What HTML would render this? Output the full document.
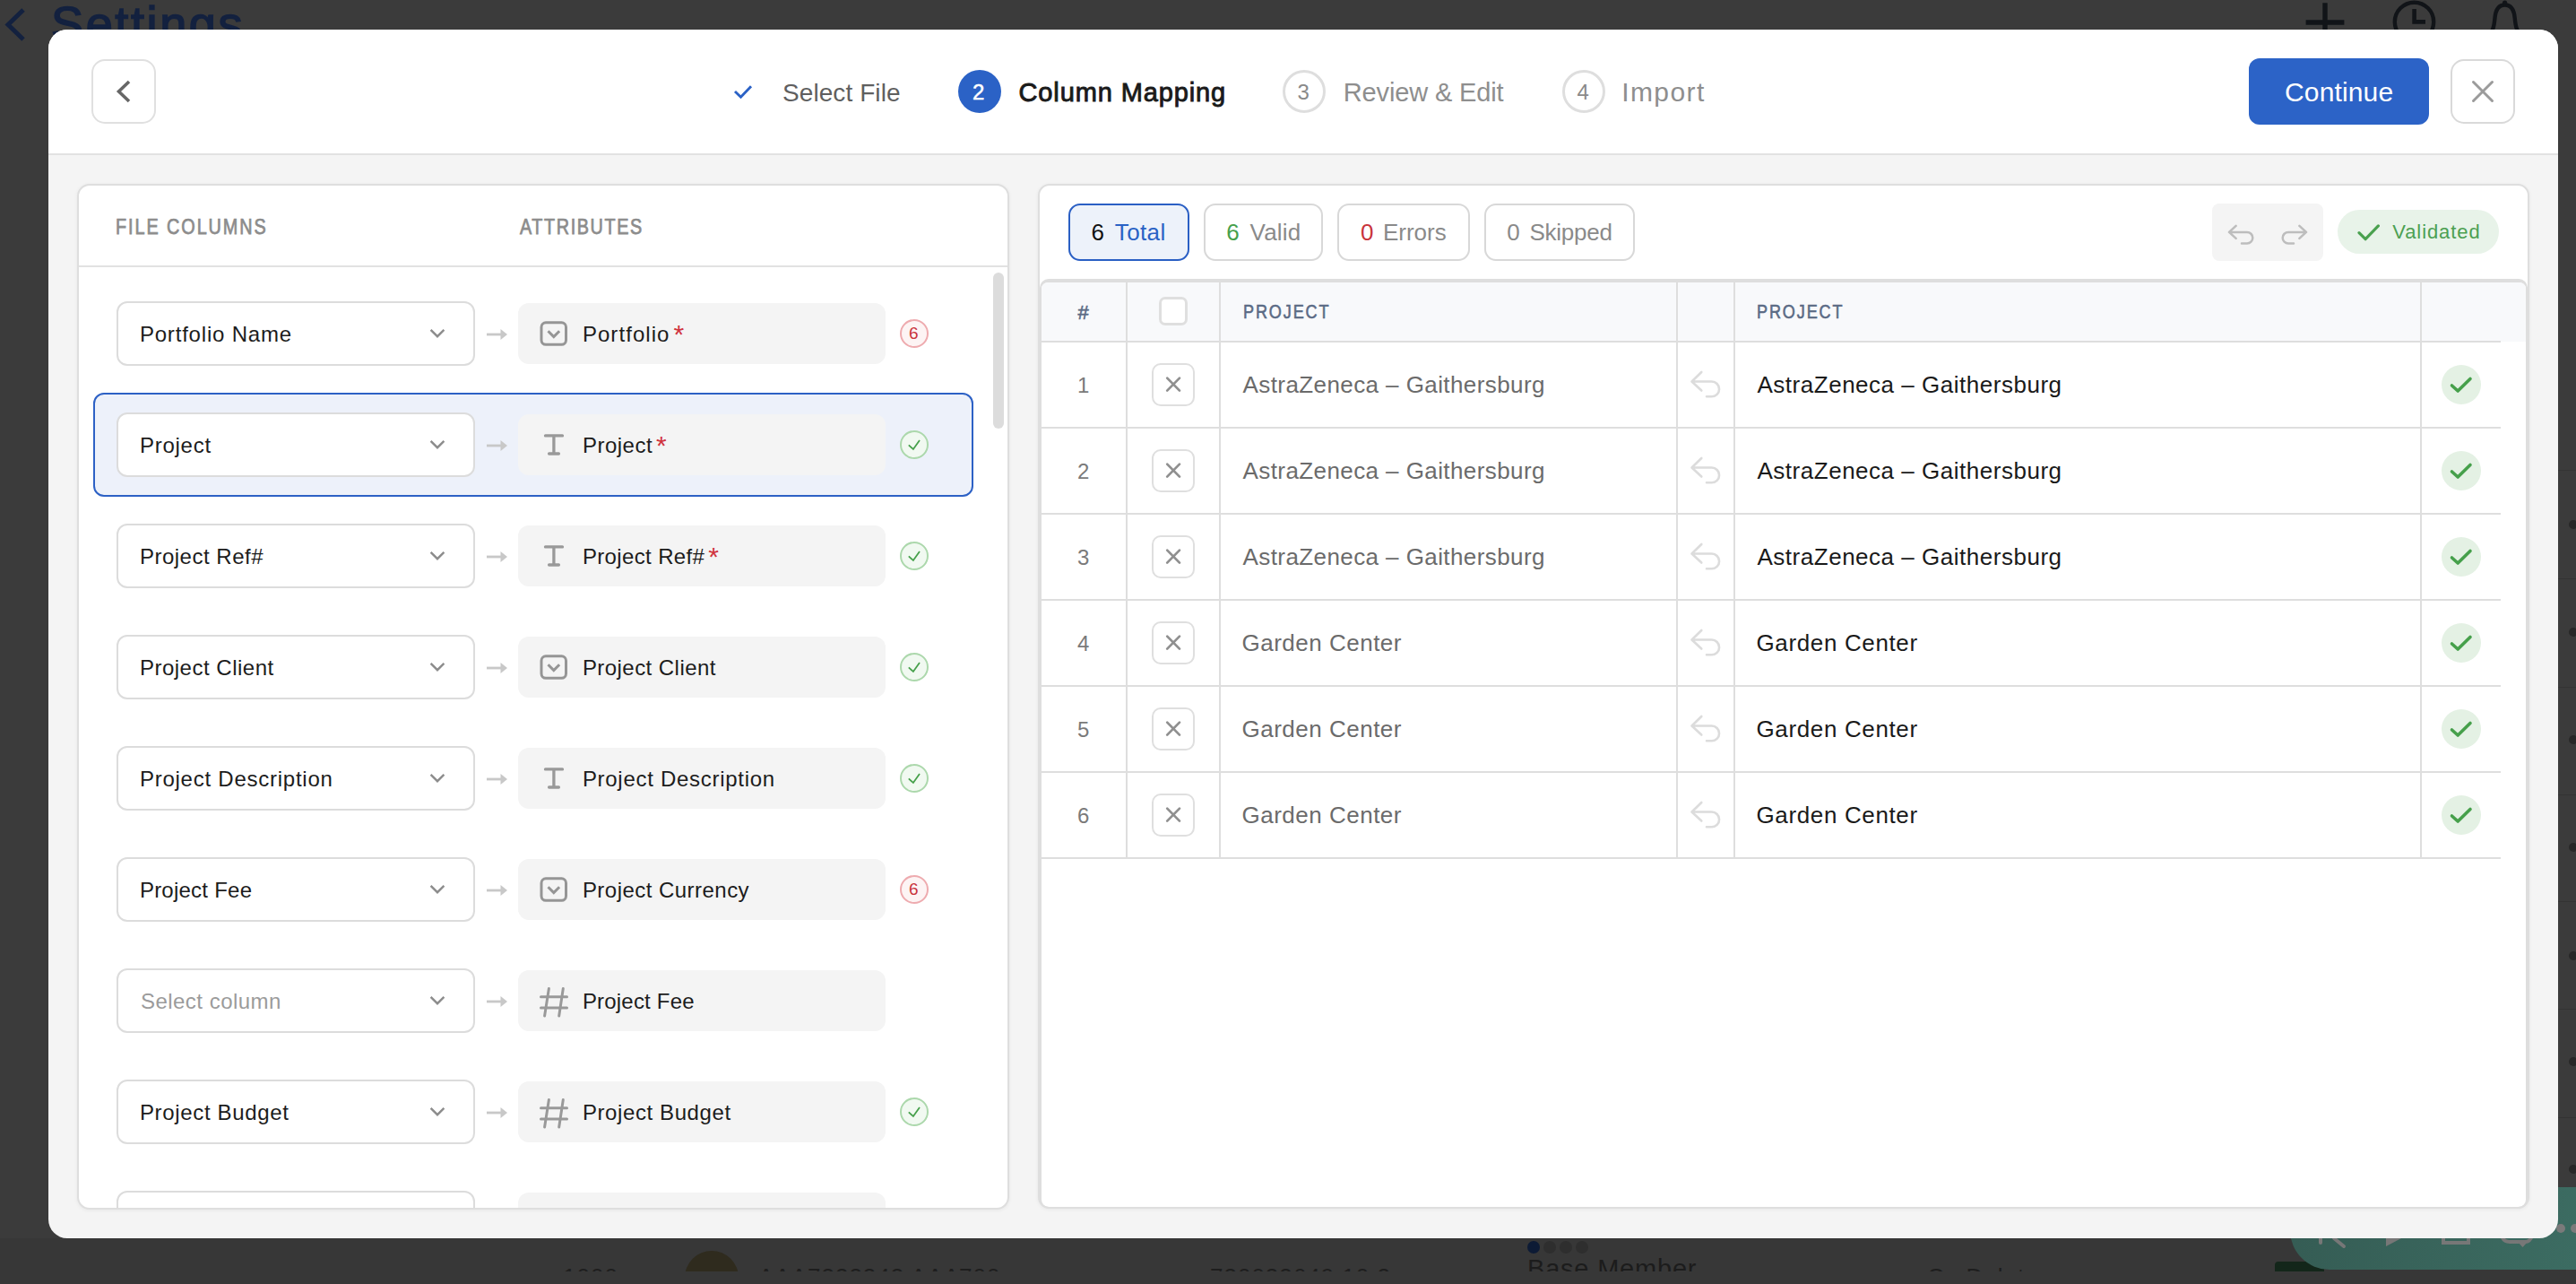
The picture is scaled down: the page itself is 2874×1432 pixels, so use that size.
<!DOCTYPE html>
<html><head><meta charset="utf-8"><style>
html,body{margin:0;padding:0;}
body{width:2874px;height:1432px;overflow:hidden;position:relative;background:#3b3b3b;font-family:"Liberation Sans", sans-serif;}
.a{position:absolute;}
.t{position:absolute;white-space:nowrap;line-height:1;}
svg.a{overflow:visible;}
</style></head><body>
<svg class="a" style="left:0px;top:0px;" width="40" height="60" viewBox="0 0 40 60"><polyline points="26,11 9,27.5 26,44" fill="none" stroke="#13213f" stroke-width="5"/></svg><div class="t" style="left:57.0px;top:-1.2px;font-size:54px;color:#13213f;font-weight:400;letter-spacing:2.629px;-webkit-text-stroke:1.6px #13213f;">Settings</div><svg class="a" style="left:2560px;top:0px;" width="280" height="34" viewBox="2560 0 280 34"><path d="M2594,3.3 V40 M2572.6,25 H2615.4" stroke="#111418" stroke-width="5.4" fill="none"/><circle cx="2693.5" cy="24.4" r="21.7" stroke="#111418" stroke-width="4.4" fill="none"/><path d="M2693.6,10 V24.4 H2706" stroke="#111418" stroke-width="4.6" fill="none"/><path d="M2776,40 C2781,35 2782.5,31 2783.5,20 C2784.5,9 2789,5.5 2794.6,5.5 C2800.2,5.5 2804.7,9 2805.7,20 C2806.7,31 2808.2,35 2813.2,40" stroke="#111418" stroke-width="4.4" fill="none"/><circle cx="2794.6" cy="3.2" r="2.6" fill="#111418"/></svg><div class="a" style="left:2854px;top:524px;width:20px;height:1px;background:#333;"></div><div class="a" style="left:2854px;top:645px;width:20px;height:1px;background:#333;"></div><div class="a" style="left:2854px;top:766px;width:20px;height:1px;background:#333;"></div><div class="a" style="left:2854px;top:886px;width:20px;height:1px;background:#333;"></div><div class="a" style="left:2854px;top:1005px;width:20px;height:1px;background:#333;"></div><div class="a" style="left:2854px;top:1125px;width:20px;height:1px;background:#333;"></div><div class="a" style="left:2854px;top:1246px;width:20px;height:1px;background:#333;"></div><div class="a" style="left:2866px;top:580px;width:10px;height:10px;border-radius:50%;background:#282828;"></div><div class="a" style="left:2866px;top:700px;width:10px;height:10px;border-radius:50%;background:#282828;"></div><div class="a" style="left:2866px;top:820px;width:10px;height:10px;border-radius:50%;background:#282828;"></div><div class="a" style="left:2866px;top:940px;width:10px;height:10px;border-radius:50%;background:#282828;"></div><div class="a" style="left:2866px;top:1061px;width:10px;height:10px;border-radius:50%;background:#282828;"></div><div class="a" style="left:2866px;top:1179px;width:10px;height:10px;border-radius:50%;background:#282828;"></div><div class="a" style="left:2866px;top:1299px;width:10px;height:10px;border-radius:50%;background:#282828;"></div><div class="a" style="left:0;top:1381px;width:2874px;height:51px;background:#373737;"></div><div class="a" style="left:0;top:1380px;width:2874px;height:51px;overflow:hidden;height:38px;"><div class="a" style="left:0;top:-1380px;width:2874px;height:1432px;"><div class="a" style="left:764px;top:1395px;width:60px;height:60px;border-radius:50%;background:#2f2b1e;"></div><div class="a" style="left:1704px;top:1384px;width:14px;height:14px;border-radius:50%;background:#0d1b35;"></div><div class="a" style="left:1722px;top:1384px;width:14px;height:14px;border-radius:50%;background:#2e2e2e;"></div><div class="a" style="left:1740px;top:1384px;width:14px;height:14px;border-radius:50%;background:#2e2e2e;"></div><div class="a" style="left:1758px;top:1384px;width:14px;height:14px;border-radius:50%;background:#2e2e2e;"></div><div class="t" style="left:1704.0px;top:1401.4px;font-size:29px;color:#1c1c1c;font-weight:400;letter-spacing:0.8px;">Base Member</div><div class="t" style="left:628.0px;top:1411.0px;font-size:26px;color:#1e1e1e;font-weight:400;letter-spacing:1px;">1000</div><div class="t" style="left:846.0px;top:1411.0px;font-size:26px;color:#1e1e1e;font-weight:400;letter-spacing:1px;">AAA7333343 AAA</div><div class="t" style="left:1070.0px;top:1411.0px;font-size:26px;color:#1e1e1e;font-weight:400;letter-spacing:1px;">700</div><div class="t" style="left:1350.0px;top:1411.0px;font-size:26px;color:#1e1e1e;font-weight:400;letter-spacing:1px;">730033649 10 2</div><div class="t" style="left:2150.0px;top:1411.0px;font-size:26px;color:#1e1e1e;font-weight:400;letter-spacing:1px;">Co Delete</div></div></div><div class="a" style="left:2538px;top:1407px;width:55px;height:11px;background:#13261a;border-radius:4px 4px 0 0;"></div><div class="a" style="left:2555px;top:1324px;width:319px;height:92px;background:linear-gradient(100deg,#355c54,#3c6c62);border-bottom-left-radius:44px;"></div><div class="a" style="left:2852px;top:1365px;width:10px;height:10px;border-radius:50%;background:#7a7a7a;"></div><div class="a" style="left:2868px;top:1365px;width:10px;height:10px;border-radius:50%;background:#7a7a7a;"></div><svg class="a" style="left:2580px;top:1381px;" width="260" height="12" viewBox="2580 1381 260 12"><path d="M2589,1379 V1386" stroke="#777" stroke-width="4" stroke-linecap="round"/><path d="M2604,1381 L2615,1390" stroke="#777" stroke-width="4" stroke-linecap="round"/><path d="M2662,1390 L2681,1380 H2662 Z" fill="#777"/><path d="M2726,1379 V1386 H2754 V1379" stroke="#777" stroke-width="4" fill="none"/><path d="M2791,1378 Q2793,1385 2800,1385 H2817 Q2823,1385 2825,1378" stroke="#777" stroke-width="4" fill="none"/><path d="M2809,1385 L2814.5,1391 L2820,1385 Z" fill="#777"/></svg><div class="a" id="modal" style="left:54px;top:33px;width:2800px;height:1348px;border-radius:21px;background:#f4f4f4;overflow:hidden;"><div class="a" style="left:-54px;top:-33px;width:2874px;height:1432px;"><div class="a" style="left:54px;top:33px;width:2800px;height:138px;background:#fff;"></div><div class="a" style="left:54px;top:171px;width:2800px;height:2px;background:#e2e2e2;"></div><div class="a" style="left:102px;top:66px;width:72px;height:72px;border:2px solid #e0e0e0;border-radius:15px;box-sizing:border-box;background:#fff;"></div><svg class="a" style="left:120px;top:80px;" width="40" height="40" viewBox="120 80 40 40"><polyline points="144,91 132.5,102 144,113" fill="none" stroke="#666" stroke-width="3.6"/></svg><svg class="a" style="left:810px;top:85px;" width="40" height="35" viewBox="810 85 40 35"><polyline points="820,102 826.5,108.2 838,96.2" fill="none" stroke="#2b62c6" stroke-width="2.9"/></svg><div class="t" style="left:873.0px;top:89.5px;font-size:28px;color:#5f5f5f;font-weight:400;letter-spacing:0.08px;">Select File</div><div class="a" style="left:1069px;top:78px;width:48px;height:48px;border-radius:50%;background:#2b62c6;"></div><div class="t" style="left:1085.0px;top:90.7px;font-size:24px;color:#fff;font-weight:400;letter-spacing:0px;-webkit-text-stroke:0.5px #fff;">2</div><div class="t" style="left:1136.5px;top:88.6px;font-size:29px;color:#1a1a1a;font-weight:400;letter-spacing:0.885px;-webkit-text-stroke:0.9px #1a1a1a;">Column Mapping</div><div class="a" style="left:1431px;top:78px;width:48px;height:48px;border-radius:50%;border:3px solid #dedede;box-sizing:border-box;"></div><div class="t" style="left:1447.5px;top:90.7px;font-size:24px;color:#8a8a8a;font-weight:400;letter-spacing:0px;">3</div><div class="t" style="left:1498.8px;top:88.6px;font-size:29px;color:#8e8e8e;font-weight:400;letter-spacing:-0.142px;">Review &amp; Edit</div><div class="a" style="left:1743px;top:78px;width:48px;height:48px;border-radius:50%;border:3px solid #dedede;box-sizing:border-box;"></div><div class="t" style="left:1759.5px;top:90.7px;font-size:24px;color:#8a8a8a;font-weight:400;letter-spacing:0px;">4</div><div class="t" style="left:1809.2px;top:87.8px;font-size:30px;color:#8e8e8e;font-weight:400;letter-spacing:1.42px;">Import</div><div class="a" style="left:2509px;top:65px;width:201px;height:74px;background:#2c63c7;border-radius:12px;"></div><div class="t" style="left:2549.0px;top:88.1px;font-size:30px;color:#fff;font-weight:400;letter-spacing:0.143px;">Continue</div><div class="a" style="left:2734px;top:66px;width:72px;height:72px;border:2px solid #d9d9d9;border-radius:15px;box-sizing:border-box;background:#fff;"></div><svg class="a" style="left:2750px;top:82px;" width="40" height="40" viewBox="2750 82 40 40"><path d="M2759.5,91.5 L2780.5,112.5 M2780.5,91.5 L2759.5,112.5" stroke="#9b9b9b" stroke-width="3" stroke-linecap="round"/></svg><div class="a" style="left:86px;top:205px;width:1040px;height:1144px;background:#fff;border:2px solid #dedede;border-radius:14px;box-sizing:border-box;box-shadow:0 1px 4px rgba(0,0,0,0.06);"></div><div class="a" style="left:88px;top:207px;width:1036px;height:1140px;overflow:hidden;border-radius:12px;"><div class="a" style="left:-88px;top:-207px;width:2874px;height:1432px;"><div class="t" style="left:128.5px;top:241.5px;font-size:23px;color:#8c8c8c;font-weight:400;letter-spacing:2.279px;-webkit-text-stroke:0.75px #8c8c8c;transform:scaleX(0.86);transform-origin:0 0;">FILE COLUMNS</div><div class="t" style="left:580.3px;top:241.5px;font-size:23px;color:#8c8c8c;font-weight:400;letter-spacing:1.891px;-webkit-text-stroke:0.75px #8c8c8c;transform:scaleX(0.86);transform-origin:0 0;">ATTRIBUTES</div><div class="a" style="left:88px;top:296px;width:1038px;height:2px;background:#e2e2e2;"></div><div class="a" style="left:1108px;top:304px;width:12px;height:174px;background:#dcdcdc;border-radius:6px;"></div><div class="a" style="left:130px;top:336px;width:400px;height:72px;background:#fff;border:2px solid #dcdcdc;border-radius:12px;box-sizing:border-box;"></div><div class="t" style="left:155.9px;top:360.7px;font-size:24px;color:#1c1c1c;font-weight:400;letter-spacing:0.808px;">Portfolio Name</div><svg class="a" style="left:470px;top:355px;" width="40" height="35" viewBox="470 355 40 35"><polyline points="480.6,367.8 488,375.2 495.4,367.8" fill="none" stroke="#8c8c8c" stroke-width="2.4"/></svg><svg class="a" style="left:540px;top:360px;" width="30" height="25" viewBox="540 360 30 25"><path d="M543,373 H561" stroke="#c8c8c8" stroke-width="2.8"/><path d="M558.5,367 L566,373 L558.5,379 Z" fill="#c8c8c8"/></svg><div class="a" style="left:578px;top:338px;width:410px;height:68px;background:#f4f4f4;border-radius:12px;"></div><svg class="a" style="left:595px;top:350px;" width="45" height="45" viewBox="595 350 45 45"><rect x="604" y="359.8" width="27.5" height="24.5" rx="5" fill="none" stroke="#959595" stroke-width="3"/><polyline points="611.5,369.2 617.8,375.6 624.1,369.2" fill="none" stroke="#959595" stroke-width="3"/></svg><div class="t" style="left:649.9px;top:360.7px;font-size:24px;color:#1c1c1c;font-weight:400;letter-spacing:1.062px;">Portfolio<span style="color:#d0343f;margin-left:4px;font-size:30px;line-height:0;letter-spacing:0;position:relative;top:2px;">*</span></div><div class="a" style="left:1004px;top:356px;width:32px;height:32px;border-radius:50%;border:2px solid #eeabaf;background:#fdf4f4;box-sizing:border-box;"></div><div class="t" style="left:1014.0px;top:362.4px;font-size:19px;color:#c9343c;font-weight:400;letter-spacing:0px;">6</div><div class="a" style="left:104px;top:438px;width:982px;height:116px;background:#edf1fa;border:2.5px solid #2d61c5;border-radius:12px;box-sizing:border-box;"></div><div class="a" style="left:130px;top:460px;width:400px;height:72px;background:#fff;border:2px solid #dcdcdc;border-radius:12px;box-sizing:border-box;"></div><div class="t" style="left:155.9px;top:484.7px;font-size:24px;color:#1c1c1c;font-weight:400;letter-spacing:0.75px;">Project</div><svg class="a" style="left:470px;top:479px;" width="40" height="35" viewBox="470 479 40 35"><polyline points="480.6,491.8 488,499.2 495.4,491.8" fill="none" stroke="#8c8c8c" stroke-width="2.4"/></svg><svg class="a" style="left:540px;top:484px;" width="30" height="25" viewBox="540 484 30 25"><path d="M543,497 H561" stroke="#c8c8c8" stroke-width="2.8"/><path d="M558.5,491 L566,497 L558.5,503 Z" fill="#c8c8c8"/></svg><div class="a" style="left:578px;top:462px;width:410px;height:68px;background:#f4f4f4;border-radius:12px;"></div><svg class="a" style="left:595px;top:475px;" width="45" height="45" viewBox="595 475 45 45"><path d="M608.5,485.9 H627.5 M617.9,485.9 V506 M612.6,506 H623.4" stroke="#999" stroke-width="3.3" stroke-linecap="round" fill="none"/></svg><div class="t" style="left:649.9px;top:484.7px;font-size:24px;color:#1c1c1c;font-weight:400;letter-spacing:0.5px;">Project<span style="color:#d0343f;margin-left:4px;font-size:30px;line-height:0;letter-spacing:0;position:relative;top:2px;">*</span></div><div class="a" style="left:1004px;top:480px;width:32px;height:32px;border-radius:50%;border:2px solid #acd8ac;background:#f1f9f1;box-sizing:border-box;"></div><svg class="a" style="left:1004px;top:480px;" width="32" height="32" viewBox="1004 480 32 32"><polyline points="1013.8,496.4 1018.9,501 1026,491" fill="none" stroke="#46a04b" stroke-width="1.8"/></svg><div class="a" style="left:130px;top:584px;width:400px;height:72px;background:#fff;border:2px solid #dcdcdc;border-radius:12px;box-sizing:border-box;"></div><div class="t" style="left:155.9px;top:608.7px;font-size:24px;color:#1c1c1c;font-weight:400;letter-spacing:0.509px;">Project Ref#</div><svg class="a" style="left:470px;top:603px;" width="40" height="35" viewBox="470 603 40 35"><polyline points="480.6,615.8 488,623.2 495.4,615.8" fill="none" stroke="#8c8c8c" stroke-width="2.4"/></svg><svg class="a" style="left:540px;top:608px;" width="30" height="25" viewBox="540 608 30 25"><path d="M543,621 H561" stroke="#c8c8c8" stroke-width="2.8"/><path d="M558.5,615 L566,621 L558.5,627 Z" fill="#c8c8c8"/></svg><div class="a" style="left:578px;top:586px;width:410px;height:68px;background:#f4f4f4;border-radius:12px;"></div><svg class="a" style="left:595px;top:599px;" width="45" height="45" viewBox="595 599 45 45"><path d="M608.5,609.9 H627.5 M617.9,609.9 V630 M612.6,630 H623.4" stroke="#999" stroke-width="3.3" stroke-linecap="round" fill="none"/></svg><div class="t" style="left:649.9px;top:608.7px;font-size:24px;color:#1c1c1c;font-weight:400;letter-spacing:0.364px;">Project Ref#<span style="color:#d0343f;margin-left:4px;font-size:30px;line-height:0;letter-spacing:0;position:relative;top:2px;">*</span></div><div class="a" style="left:1004px;top:604px;width:32px;height:32px;border-radius:50%;border:2px solid #acd8ac;background:#f1f9f1;box-sizing:border-box;"></div><svg class="a" style="left:1004px;top:604px;" width="32" height="32" viewBox="1004 604 32 32"><polyline points="1013.8,620.4 1018.9,625 1026,615" fill="none" stroke="#46a04b" stroke-width="1.8"/></svg><div class="a" style="left:130px;top:708px;width:400px;height:72px;background:#fff;border:2px solid #dcdcdc;border-radius:12px;box-sizing:border-box;"></div><div class="t" style="left:155.9px;top:732.7px;font-size:24px;color:#1c1c1c;font-weight:400;letter-spacing:0.508px;">Project Client</div><svg class="a" style="left:470px;top:727px;" width="40" height="35" viewBox="470 727 40 35"><polyline points="480.6,739.8 488,747.2 495.4,739.8" fill="none" stroke="#8c8c8c" stroke-width="2.4"/></svg><svg class="a" style="left:540px;top:732px;" width="30" height="25" viewBox="540 732 30 25"><path d="M543,745 H561" stroke="#c8c8c8" stroke-width="2.8"/><path d="M558.5,739 L566,745 L558.5,751 Z" fill="#c8c8c8"/></svg><div class="a" style="left:578px;top:710px;width:410px;height:68px;background:#f4f4f4;border-radius:12px;"></div><svg class="a" style="left:595px;top:722px;" width="45" height="45" viewBox="595 722 45 45"><rect x="604" y="731.8" width="27.5" height="24.5" rx="5" fill="none" stroke="#959595" stroke-width="3"/><polyline points="611.5,741.2 617.8,747.6 624.1,741.2" fill="none" stroke="#959595" stroke-width="3"/></svg><div class="t" style="left:649.9px;top:732.7px;font-size:24px;color:#1c1c1c;font-weight:400;letter-spacing:0.446px;">Project Client</div><div class="a" style="left:1004px;top:728px;width:32px;height:32px;border-radius:50%;border:2px solid #acd8ac;background:#f1f9f1;box-sizing:border-box;"></div><svg class="a" style="left:1004px;top:728px;" width="32" height="32" viewBox="1004 728 32 32"><polyline points="1013.8,744.4 1018.9,749 1026,739" fill="none" stroke="#46a04b" stroke-width="1.8"/></svg><div class="a" style="left:130px;top:832px;width:400px;height:72px;background:#fff;border:2px solid #dcdcdc;border-radius:12px;box-sizing:border-box;"></div><div class="t" style="left:155.9px;top:856.7px;font-size:24px;color:#1c1c1c;font-weight:400;letter-spacing:0.756px;">Project Description</div><svg class="a" style="left:470px;top:851px;" width="40" height="35" viewBox="470 851 40 35"><polyline points="480.6,863.8 488,871.2 495.4,863.8" fill="none" stroke="#8c8c8c" stroke-width="2.4"/></svg><svg class="a" style="left:540px;top:856px;" width="30" height="25" viewBox="540 856 30 25"><path d="M543,869 H561" stroke="#c8c8c8" stroke-width="2.8"/><path d="M558.5,863 L566,869 L558.5,875 Z" fill="#c8c8c8"/></svg><div class="a" style="left:578px;top:834px;width:410px;height:68px;background:#f4f4f4;border-radius:12px;"></div><svg class="a" style="left:595px;top:847px;" width="45" height="45" viewBox="595 847 45 45"><path d="M608.5,857.9 H627.5 M617.9,857.9 V878 M612.6,878 H623.4" stroke="#999" stroke-width="3.3" stroke-linecap="round" fill="none"/></svg><div class="t" style="left:649.9px;top:856.7px;font-size:24px;color:#1c1c1c;font-weight:400;letter-spacing:0.711px;">Project Description</div><div class="a" style="left:1004px;top:852px;width:32px;height:32px;border-radius:50%;border:2px solid #acd8ac;background:#f1f9f1;box-sizing:border-box;"></div><svg class="a" style="left:1004px;top:852px;" width="32" height="32" viewBox="1004 852 32 32"><polyline points="1013.8,868.4 1018.9,873 1026,863" fill="none" stroke="#46a04b" stroke-width="1.8"/></svg><div class="a" style="left:130px;top:956px;width:400px;height:72px;background:#fff;border:2px solid #dcdcdc;border-radius:12px;box-sizing:border-box;"></div><div class="t" style="left:155.9px;top:980.7px;font-size:24px;color:#1c1c1c;font-weight:400;letter-spacing:0.24px;">Project Fee</div><svg class="a" style="left:470px;top:975px;" width="40" height="35" viewBox="470 975 40 35"><polyline points="480.6,987.8 488,995.2 495.4,987.8" fill="none" stroke="#8c8c8c" stroke-width="2.4"/></svg><svg class="a" style="left:540px;top:980px;" width="30" height="25" viewBox="540 980 30 25"><path d="M543,993 H561" stroke="#c8c8c8" stroke-width="2.8"/><path d="M558.5,987 L566,993 L558.5,999 Z" fill="#c8c8c8"/></svg><div class="a" style="left:578px;top:958px;width:410px;height:68px;background:#f4f4f4;border-radius:12px;"></div><svg class="a" style="left:595px;top:970px;" width="45" height="45" viewBox="595 970 45 45"><rect x="604" y="979.8" width="27.5" height="24.5" rx="5" fill="none" stroke="#959595" stroke-width="3"/><polyline points="611.5,989.2 617.8,995.6 624.1,989.2" fill="none" stroke="#959595" stroke-width="3"/></svg><div class="t" style="left:649.9px;top:980.7px;font-size:24px;color:#1c1c1c;font-weight:400;letter-spacing:0.467px;">Project Currency</div><div class="a" style="left:1004px;top:976px;width:32px;height:32px;border-radius:50%;border:2px solid #eeabaf;background:#fdf4f4;box-sizing:border-box;"></div><div class="t" style="left:1014.0px;top:982.4px;font-size:19px;color:#c9343c;font-weight:400;letter-spacing:0px;">6</div><div class="a" style="left:130px;top:1080px;width:400px;height:72px;background:#fff;border:2px solid #dcdcdc;border-radius:12px;box-sizing:border-box;"></div><div class="t" style="left:156.9px;top:1104.7px;font-size:24px;color:#9b9b9b;font-weight:400;letter-spacing:0.483px;">Select column</div><svg class="a" style="left:470px;top:1099px;" width="40" height="35" viewBox="470 1099 40 35"><polyline points="480.6,1111.8 488,1119.2 495.4,1111.8" fill="none" stroke="#8c8c8c" stroke-width="2.4"/></svg><svg class="a" style="left:540px;top:1104px;" width="30" height="25" viewBox="540 1104 30 25"><path d="M543,1117 H561" stroke="#c8c8c8" stroke-width="2.8"/><path d="M558.5,1111 L566,1117 L558.5,1123 Z" fill="#c8c8c8"/></svg><div class="a" style="left:578px;top:1082px;width:410px;height:68px;background:#f4f4f4;border-radius:12px;"></div><svg class="a" style="left:595px;top:1094px;" width="45" height="45" viewBox="595 1094 45 45"><path d="M612.4,1102.5 L607.6,1133 M628.3,1102.5 L623.7,1133 M603.5,1111.8 H632.5 M603.5,1124 H632.5" stroke="#999" stroke-width="3" stroke-linecap="round" fill="none"/></svg><div class="t" style="left:649.9px;top:1104.7px;font-size:24px;color:#1c1c1c;font-weight:400;letter-spacing:0.2px;">Project Fee</div><div class="a" style="left:130px;top:1204px;width:400px;height:72px;background:#fff;border:2px solid #dcdcdc;border-radius:12px;box-sizing:border-box;"></div><div class="t" style="left:155.9px;top:1228.7px;font-size:24px;color:#1c1c1c;font-weight:400;letter-spacing:0.662px;">Project Budget</div><svg class="a" style="left:470px;top:1223px;" width="40" height="35" viewBox="470 1223 40 35"><polyline points="480.6,1235.8 488,1243.2 495.4,1235.8" fill="none" stroke="#8c8c8c" stroke-width="2.4"/></svg><svg class="a" style="left:540px;top:1228px;" width="30" height="25" viewBox="540 1228 30 25"><path d="M543,1241 H561" stroke="#c8c8c8" stroke-width="2.8"/><path d="M558.5,1235 L566,1241 L558.5,1247 Z" fill="#c8c8c8"/></svg><div class="a" style="left:578px;top:1206px;width:410px;height:68px;background:#f4f4f4;border-radius:12px;"></div><svg class="a" style="left:595px;top:1218px;" width="45" height="45" viewBox="595 1218 45 45"><path d="M612.4,1226.5 L607.6,1257 M628.3,1226.5 L623.7,1257 M603.5,1235.8 H632.5 M603.5,1248 H632.5" stroke="#999" stroke-width="3" stroke-linecap="round" fill="none"/></svg><div class="t" style="left:649.9px;top:1228.7px;font-size:24px;color:#1c1c1c;font-weight:400;letter-spacing:0.6px;">Project Budget</div><div class="a" style="left:1004px;top:1224px;width:32px;height:32px;border-radius:50%;border:2px solid #acd8ac;background:#f1f9f1;box-sizing:border-box;"></div><svg class="a" style="left:1004px;top:1224px;" width="32" height="32" viewBox="1004 1224 32 32"><polyline points="1013.8,1240.4 1018.9,1245 1026,1235" fill="none" stroke="#46a04b" stroke-width="1.8"/></svg><div class="a" style="left:130px;top:1328px;width:400px;height:72px;background:#fff;border:2px solid #dcdcdc;border-radius:12px;box-sizing:border-box;"></div><div class="t" style="left:155.9px;top:1352.7px;font-size:24px;color:#1c1c1c;font-weight:400;letter-spacing:0.614px;">Project Manager</div><svg class="a" style="left:470px;top:1347px;" width="40" height="35" viewBox="470 1347 40 35"><polyline points="480.6,1359.8 488,1367.2 495.4,1359.8" fill="none" stroke="#8c8c8c" stroke-width="2.4"/></svg><svg class="a" style="left:540px;top:1352px;" width="30" height="25" viewBox="540 1352 30 25"><path d="M543,1365 H561" stroke="#c8c8c8" stroke-width="2.8"/><path d="M558.5,1359 L566,1365 L558.5,1371 Z" fill="#c8c8c8"/></svg><div class="a" style="left:578px;top:1330px;width:410px;height:68px;background:#f4f4f4;border-radius:12px;"></div><svg class="a" style="left:595px;top:1343px;" width="45" height="45" viewBox="595 1343 45 45"><path d="M608.5,1353.9 H627.5 M617.9,1353.9 V1374 M612.6,1374 H623.4" stroke="#999" stroke-width="3.3" stroke-linecap="round" fill="none"/></svg><div class="t" style="left:649.9px;top:1352.7px;font-size:24px;color:#1c1c1c;font-weight:400;letter-spacing:0.557px;">Project Manager</div></div></div><div class="a" style="left:1158px;top:205px;width:1664px;height:1143px;background:#fff;border:2px solid #dedede;border-radius:13px;box-sizing:border-box;box-shadow:0 1px 4px rgba(0,0,0,0.06);"></div><div class="a" style="left:1160px;top:311px;width:1660px;height:1037px;border:2px solid #dedede;border-top-width:4px;border-radius:10px;box-sizing:border-box;"></div><div class="a" style="left:1192px;top:227px;width:135px;height:64px;background:#edf2fa;border:2.5px solid #2a5fc4;border-radius:13px;box-sizing:border-box;"></div><div class="t" style="left:1217.5px;top:246.3px;font-size:26px;color:#111;font-weight:400;letter-spacing:0px;">6</div><div class="t" style="left:1243.8px;top:246.3px;font-size:26px;color:#2a62c5;font-weight:400;letter-spacing:0.375px;">Total</div><div class="a" style="left:1343px;top:227px;width:133px;height:64px;border:2px solid #d8d8d8;border-radius:13px;box-sizing:border-box;"></div><div class="t" style="left:1368.2px;top:246.3px;font-size:26px;color:#46a04b;font-weight:400;letter-spacing:0px;">6</div><div class="t" style="left:1394.6px;top:246.3px;font-size:26px;color:#8a8a8a;font-weight:400;letter-spacing:0.2px;">Valid</div><div class="a" style="left:1492px;top:227px;width:148px;height:64px;border:2px solid #d8d8d8;border-radius:13px;box-sizing:border-box;"></div><div class="t" style="left:1518.1px;top:246.3px;font-size:26px;color:#c9343c;font-weight:400;letter-spacing:0px;">0</div><div class="t" style="left:1543.0px;top:246.3px;font-size:26px;color:#8a8a8a;font-weight:400;letter-spacing:-0.02px;">Errors</div><div class="a" style="left:1656px;top:227px;width:168px;height:64px;border:2px solid #d8d8d8;border-radius:13px;box-sizing:border-box;"></div><div class="t" style="left:1681.2px;top:246.3px;font-size:26px;color:#8a8a8a;font-weight:400;letter-spacing:0px;">0</div><div class="t" style="left:1706.5px;top:246.3px;font-size:26px;color:#8a8a8a;font-weight:400;letter-spacing:-0.267px;">Skipped</div><div class="a" style="left:2468px;top:227px;width:124px;height:64px;background:#f4f4f4;border-radius:8px;"></div><svg class="a" style="left:2475px;top:240px;" width="110" height="40" viewBox="2475 240 110 40"><path d="M2494.6,251.9 L2487,258.9 L2494.6,265.9 M2487.5,258.9 H2507 A6.3,6.3 0 0 1 2507,271.5 H2501" fill="none" stroke="#bdbdbd" stroke-width="2.5" stroke-linecap="round" stroke-linejoin="round"/><path d="M2565.4,251.9 L2573,258.9 L2565.4,265.9 M2572.5,258.9 H2553 A6.3,6.3 0 0 0 2553,271.5 H2559" fill="none" stroke="#bdbdbd" stroke-width="2.5" stroke-linecap="round" stroke-linejoin="round"/></svg><div class="a" style="left:2608px;top:234px;width:180px;height:49px;background:#e8f3e9;border-radius:25px;"></div><svg class="a" style="left:2625px;top:245px;" width="35" height="30" viewBox="2625 245 35 30"><polyline points="2632,259.6 2639.1,266.7 2653.4,251.9" fill="none" stroke="#4aa14f" stroke-width="3.2" stroke-linecap="round" stroke-linejoin="round"/></svg><div class="t" style="left:2669.2px;top:248.4px;font-size:22px;color:#4ca052;font-weight:400;letter-spacing:0.925px;">Validated</div><div class="a" style="left:1162px;top:315px;width:1656px;height:66px;background:#f8f9fb;border-radius:7px 7px 0 0;"></div><div class="a" style="left:1161px;top:380px;width:1629px;height:2px;background:#dedede;"></div><div class="a" style="left:1161px;top:476px;width:1629px;height:2px;background:#dedede;"></div><div class="a" style="left:1161px;top:572px;width:1629px;height:2px;background:#dedede;"></div><div class="a" style="left:1161px;top:668px;width:1629px;height:2px;background:#dedede;"></div><div class="a" style="left:1161px;top:764px;width:1629px;height:2px;background:#dedede;"></div><div class="a" style="left:1161px;top:860px;width:1629px;height:2px;background:#dedede;"></div><div class="a" style="left:1161px;top:956px;width:1629px;height:2px;background:#dedede;"></div><div class="a" style="left:1256px;top:315px;width:2px;height:643px;background:#dedede;"></div><div class="a" style="left:1360px;top:315px;width:2px;height:643px;background:#dedede;"></div><div class="a" style="left:1870px;top:315px;width:2px;height:643px;background:#dedede;"></div><div class="a" style="left:1934px;top:315px;width:2px;height:643px;background:#dedede;"></div><div class="a" style="left:2700px;top:315px;width:2px;height:643px;background:#dedede;"></div><div class="t" style="left:1202.5px;top:337.9px;font-size:22px;color:#5b6b85;font-weight:400;letter-spacing:0px;-webkit-text-stroke:0.6px #5b6b85;">#</div><div class="a" style="left:1293px;top:331px;width:32px;height:32px;background:#fff;border:3px solid #dfdfdf;border-radius:7px;box-sizing:border-box;"></div><div class="t" style="left:1386.6px;top:338.3px;font-size:21.5px;color:#5b6b85;font-weight:400;letter-spacing:2.23px;-webkit-text-stroke:0.6px #5b6b85;transform:scaleX(0.84);transform-origin:0 0;">PROJECT</div><div class="t" style="left:1959.7px;top:338.3px;font-size:21.5px;color:#5b6b85;font-weight:400;letter-spacing:2.23px;-webkit-text-stroke:0.6px #5b6b85;transform:scaleX(0.84);transform-origin:0 0;">PROJECT</div><div class="t" style="left:1202.0px;top:418.0px;font-size:24px;color:#7a7a7a;font-weight:400;letter-spacing:0px;">1</div><div class="a" style="left:1285px;top:405px;width:48px;height:48px;background:#fff;border:2px solid #dfdfdf;border-radius:10px;box-sizing:border-box;"></div><svg class="a" style="left:1295px;top:415px;" width="30" height="30" viewBox="1295 415 30 30"><path d="M1302.2,421.6 L1316,435.6 M1316,421.6 L1302.2,435.6" stroke="#8f8f8f" stroke-width="2.7" stroke-linecap="round"/></svg><div class="t" style="left:1386.5px;top:416.3px;font-size:26px;color:#6b6b6b;font-weight:400;letter-spacing:0.416px;">AstraZeneca – Gaithersburg</div><svg class="a" style="left:1880px;top:405px;" width="45" height="45" viewBox="1880 405 45 45"><path d="M1898.3,415 L1887.5,425.5 L1898.3,435.5 M1888,425.5 H1909.7 A8.4,8.4 0 0 1 1909.7,442.3 H1904" fill="none" stroke="#dcdcdc" stroke-width="2.6" stroke-linecap="round" stroke-linejoin="round"/></svg><div class="t" style="left:1960.5px;top:416.3px;font-size:26px;color:#1a1a1a;font-weight:400;letter-spacing:0.516px;">AstraZeneca – Gaithersburg</div><div class="a" style="left:2724px;top:407px;width:44px;height:44px;border-radius:50%;background:#e4f1e4;"></div><svg class="a" style="left:2725px;top:408px;" width="42" height="42" viewBox="2725 408 42 42"><polyline points="2735.5,430 2742.2,436 2756,422.5" fill="none" stroke="#46a04b" stroke-width="3.6" stroke-linecap="round" stroke-linejoin="round"/></svg><div class="t" style="left:1202.0px;top:514.0px;font-size:24px;color:#7a7a7a;font-weight:400;letter-spacing:0px;">2</div><div class="a" style="left:1285px;top:501px;width:48px;height:48px;background:#fff;border:2px solid #dfdfdf;border-radius:10px;box-sizing:border-box;"></div><svg class="a" style="left:1295px;top:511px;" width="30" height="30" viewBox="1295 511 30 30"><path d="M1302.2,517.6 L1316,531.6 M1316,517.6 L1302.2,531.6" stroke="#8f8f8f" stroke-width="2.7" stroke-linecap="round"/></svg><div class="t" style="left:1386.5px;top:512.3px;font-size:26px;color:#6b6b6b;font-weight:400;letter-spacing:0.416px;">AstraZeneca – Gaithersburg</div><svg class="a" style="left:1880px;top:501px;" width="45" height="45" viewBox="1880 501 45 45"><path d="M1898.3,511 L1887.5,521.5 L1898.3,531.5 M1888,521.5 H1909.7 A8.4,8.4 0 0 1 1909.7,538.3 H1904" fill="none" stroke="#dcdcdc" stroke-width="2.6" stroke-linecap="round" stroke-linejoin="round"/></svg><div class="t" style="left:1960.5px;top:512.3px;font-size:26px;color:#1a1a1a;font-weight:400;letter-spacing:0.516px;">AstraZeneca – Gaithersburg</div><div class="a" style="left:2724px;top:503px;width:44px;height:44px;border-radius:50%;background:#e4f1e4;"></div><svg class="a" style="left:2725px;top:504px;" width="42" height="42" viewBox="2725 504 42 42"><polyline points="2735.5,526 2742.2,532 2756,518.5" fill="none" stroke="#46a04b" stroke-width="3.6" stroke-linecap="round" stroke-linejoin="round"/></svg><div class="t" style="left:1202.0px;top:610.0px;font-size:24px;color:#7a7a7a;font-weight:400;letter-spacing:0px;">3</div><div class="a" style="left:1285px;top:597px;width:48px;height:48px;background:#fff;border:2px solid #dfdfdf;border-radius:10px;box-sizing:border-box;"></div><svg class="a" style="left:1295px;top:607px;" width="30" height="30" viewBox="1295 607 30 30"><path d="M1302.2,613.6 L1316,627.6 M1316,613.6 L1302.2,627.6" stroke="#8f8f8f" stroke-width="2.7" stroke-linecap="round"/></svg><div class="t" style="left:1386.5px;top:608.3px;font-size:26px;color:#6b6b6b;font-weight:400;letter-spacing:0.416px;">AstraZeneca – Gaithersburg</div><svg class="a" style="left:1880px;top:597px;" width="45" height="45" viewBox="1880 597 45 45"><path d="M1898.3,607 L1887.5,617.5 L1898.3,627.5 M1888,617.5 H1909.7 A8.4,8.4 0 0 1 1909.7,634.3 H1904" fill="none" stroke="#dcdcdc" stroke-width="2.6" stroke-linecap="round" stroke-linejoin="round"/></svg><div class="t" style="left:1960.5px;top:608.3px;font-size:26px;color:#1a1a1a;font-weight:400;letter-spacing:0.516px;">AstraZeneca – Gaithersburg</div><div class="a" style="left:2724px;top:599px;width:44px;height:44px;border-radius:50%;background:#e4f1e4;"></div><svg class="a" style="left:2725px;top:600px;" width="42" height="42" viewBox="2725 600 42 42"><polyline points="2735.5,622 2742.2,628 2756,614.5" fill="none" stroke="#46a04b" stroke-width="3.6" stroke-linecap="round" stroke-linejoin="round"/></svg><div class="t" style="left:1202.0px;top:706.0px;font-size:24px;color:#7a7a7a;font-weight:400;letter-spacing:0px;">4</div><div class="a" style="left:1285px;top:693px;width:48px;height:48px;background:#fff;border:2px solid #dfdfdf;border-radius:10px;box-sizing:border-box;"></div><svg class="a" style="left:1295px;top:703px;" width="30" height="30" viewBox="1295 703 30 30"><path d="M1302.2,709.6 L1316,723.6 M1316,709.6 L1302.2,723.6" stroke="#8f8f8f" stroke-width="2.7" stroke-linecap="round"/></svg><div class="t" style="left:1385.5px;top:704.3px;font-size:26px;color:#6b6b6b;font-weight:400;letter-spacing:0.5px;">Garden Center</div><svg class="a" style="left:1880px;top:693px;" width="45" height="45" viewBox="1880 693 45 45"><path d="M1898.3,703 L1887.5,713.5 L1898.3,723.5 M1888,713.5 H1909.7 A8.4,8.4 0 0 1 1909.7,730.3 H1904" fill="none" stroke="#dcdcdc" stroke-width="2.6" stroke-linecap="round" stroke-linejoin="round"/></svg><div class="t" style="left:1959.5px;top:704.3px;font-size:26px;color:#1a1a1a;font-weight:400;letter-spacing:0.633px;">Garden Center</div><div class="a" style="left:2724px;top:695px;width:44px;height:44px;border-radius:50%;background:#e4f1e4;"></div><svg class="a" style="left:2725px;top:696px;" width="42" height="42" viewBox="2725 696 42 42"><polyline points="2735.5,718 2742.2,724 2756,710.5" fill="none" stroke="#46a04b" stroke-width="3.6" stroke-linecap="round" stroke-linejoin="round"/></svg><div class="t" style="left:1202.0px;top:802.0px;font-size:24px;color:#7a7a7a;font-weight:400;letter-spacing:0px;">5</div><div class="a" style="left:1285px;top:789px;width:48px;height:48px;background:#fff;border:2px solid #dfdfdf;border-radius:10px;box-sizing:border-box;"></div><svg class="a" style="left:1295px;top:799px;" width="30" height="30" viewBox="1295 799 30 30"><path d="M1302.2,805.6 L1316,819.6 M1316,805.6 L1302.2,819.6" stroke="#8f8f8f" stroke-width="2.7" stroke-linecap="round"/></svg><div class="t" style="left:1385.5px;top:800.3px;font-size:26px;color:#6b6b6b;font-weight:400;letter-spacing:0.5px;">Garden Center</div><svg class="a" style="left:1880px;top:789px;" width="45" height="45" viewBox="1880 789 45 45"><path d="M1898.3,799 L1887.5,809.5 L1898.3,819.5 M1888,809.5 H1909.7 A8.4,8.4 0 0 1 1909.7,826.3 H1904" fill="none" stroke="#dcdcdc" stroke-width="2.6" stroke-linecap="round" stroke-linejoin="round"/></svg><div class="t" style="left:1959.5px;top:800.3px;font-size:26px;color:#1a1a1a;font-weight:400;letter-spacing:0.633px;">Garden Center</div><div class="a" style="left:2724px;top:791px;width:44px;height:44px;border-radius:50%;background:#e4f1e4;"></div><svg class="a" style="left:2725px;top:792px;" width="42" height="42" viewBox="2725 792 42 42"><polyline points="2735.5,814 2742.2,820 2756,806.5" fill="none" stroke="#46a04b" stroke-width="3.6" stroke-linecap="round" stroke-linejoin="round"/></svg><div class="t" style="left:1202.0px;top:898.0px;font-size:24px;color:#7a7a7a;font-weight:400;letter-spacing:0px;">6</div><div class="a" style="left:1285px;top:885px;width:48px;height:48px;background:#fff;border:2px solid #dfdfdf;border-radius:10px;box-sizing:border-box;"></div><svg class="a" style="left:1295px;top:895px;" width="30" height="30" viewBox="1295 895 30 30"><path d="M1302.2,901.6 L1316,915.6 M1316,901.6 L1302.2,915.6" stroke="#8f8f8f" stroke-width="2.7" stroke-linecap="round"/></svg><div class="t" style="left:1385.5px;top:896.3px;font-size:26px;color:#6b6b6b;font-weight:400;letter-spacing:0.5px;">Garden Center</div><svg class="a" style="left:1880px;top:885px;" width="45" height="45" viewBox="1880 885 45 45"><path d="M1898.3,895 L1887.5,905.5 L1898.3,915.5 M1888,905.5 H1909.7 A8.4,8.4 0 0 1 1909.7,922.3 H1904" fill="none" stroke="#dcdcdc" stroke-width="2.6" stroke-linecap="round" stroke-linejoin="round"/></svg><div class="t" style="left:1959.5px;top:896.3px;font-size:26px;color:#1a1a1a;font-weight:400;letter-spacing:0.633px;">Garden Center</div><div class="a" style="left:2724px;top:887px;width:44px;height:44px;border-radius:50%;background:#e4f1e4;"></div><svg class="a" style="left:2725px;top:888px;" width="42" height="42" viewBox="2725 888 42 42"><polyline points="2735.5,910 2742.2,916 2756,902.5" fill="none" stroke="#46a04b" stroke-width="3.6" stroke-linecap="round" stroke-linejoin="round"/></svg></div></div>
</body></html>
